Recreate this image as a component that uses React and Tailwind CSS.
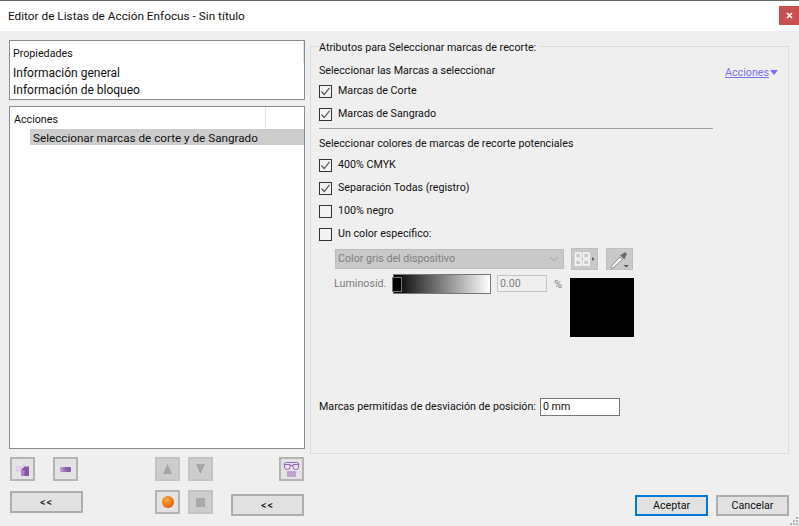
const font = { fontFamily: 'Roboto, "Noto Sans", sans-serif' };

function Check({ checked, label, mt }) {
  return (
    <div className={`flex items-center gap-[6px] h-[14px] ${mt}`}>
      <span className="w-[13px] h-[13px] border border-[#333] bg-[#f3f3f3] flex items-center justify-center shrink-0">
        {checked && (
          <svg width="11" height="11" viewBox="0 0 11 11" fill="none">
            <path d="M1.5 5.5L4.2 8.5L9.5 1.8" stroke="#555" strokeWidth="1.2" />
          </svg>
        )}
      </span>
      <span className="text-[10.7px] text-[#111] leading-none whitespace-nowrap">{label}</span>
    </div>
  );
}

function ToolBtn({ children, disabled, className = "" }) {
  return (
    <button className={`w-[25px] h-[24px] border-2 flex items-center justify-center shrink-0 ${disabled ? "border-[#c3c3c3] bg-[#cdcdcd]" : "border-[#b4b4b4] bg-[#e3e3e3]"} ${className}`}>
      {children}
    </button>
  );
}

function BackBtn({ className = "" }) {
  return (
    <button className={`w-[73px] h-[22px] border-2 border-[#adadad] bg-[#e1e1e1] text-[11px] text-[#111] flex items-center justify-center leading-none tracking-[1px] ${className}`}>
      {"<<"}
    </button>
  );
}

export default function App() {
  return (
    <div style={font} className="w-[799px] h-[526px] bg-[#efefef] flex flex-col overflow-hidden relative">
      <header className="h-[31px] bg-white border-t border-[#666] flex items-center justify-between shrink-0">
        <span className="ml-[8px] mt-[2px] text-[11.8px] text-[#111] leading-none">Editor de Listas de Acción Enfocus - Sin título</span>
        <span className="mt-[-1px] w-[20px] h-[19px] bg-[#c75050] text-white flex items-center justify-center">
          <svg width="7" height="7" viewBox="0 0 7 7"><path d="M1 1L6 6M6 1L1 6" stroke="#fff" strokeWidth="1.7" /></svg>
        </span>
      </header>

      <div className="flex-1 flex pl-[9px] pr-[10px] min-h-0">
        <div className="w-[296px] shrink-0 flex flex-col pt-[9px]">
          <section className="h-[60px] bg-white border border-[#868c96] pl-[3px] relative shrink-0">
            <div className="text-[10.7px] leading-none text-[#111] mt-[8px]">Propiedades</div>
            <div className="text-[12px] leading-none text-[#111] mt-[7px]">Información general</div>
            <div className="text-[12px] leading-none text-[#111] mt-[5px]">Información de bloqueo</div>
            <div className="absolute right-0 top-0 w-px h-[22px] bg-[#e3e3e3]" />
          </section>

          <section className="h-[343px] mt-[6px] bg-white border border-[#868c96] shrink-0">
            <div className="h-[22px] flex items-center pl-[4px]">
              <span className="flex-1 mt-[5px] text-[10.7px] text-[#111] leading-none">Acciones</span>
              <span className="w-[39px] h-full border-l border-[#e3e3e3]" />
            </div>
            <div className="ml-[20px] h-[16px] bg-[#cdcdcd] pl-[3px] pt-[3px] flex items-center text-[11.7px] text-[#111] leading-none whitespace-nowrap">
              Seleccionar marcas de corte y de Sangrado
            </div>
          </section>

          <div className="flex items-center mt-[8px] pl-[1px]">
            <ToolBtn>
              <svg width="15" height="16" viewBox="0 0 15 16">
                <path d="M1 6L5 1.5H9.5V5L6 8V11H1Z" fill="#dccfe5" />
                <path d="M5 1.5H9.5L6.5 5H2Z" fill="#eee6f2" />
                <path d="M6 9L9.5 5.5H14V15H6Z" fill="#8a55a6" />
                <path d="M6 9H9.5V15H6Z" fill="#ab84c1" />
              </svg>
            </ToolBtn>
            <ToolBtn className="ml-[18px]">
              <svg width="13" height="7" viewBox="0 0 13 7">
                <defs><linearGradient id="m" x1="0" x2="1" y1="0" y2="0"><stop offset="0" stopColor="#c2a6d2" /><stop offset="0.6" stopColor="#8c5ba6" /></linearGradient></defs>
                <rect x="1" y="1" width="11" height="5" rx="1" fill="url(#m)" />
              </svg>
            </ToolBtn>
            <ToolBtn disabled className="ml-[77px]">
              <svg width="11" height="10" viewBox="0 0 11 10"><path d="M5.5 0L10 10H1Z" fill="#a5a5a5" /></svg>
            </ToolBtn>
            <ToolBtn disabled className="ml-[8px]">
              <svg width="11" height="10" viewBox="0 0 11 10"><path d="M1 0H10L5.5 10Z" fill="#a5a5a5" /></svg>
            </ToolBtn>
            <ToolBtn className="ml-[66px]">
              <svg width="17" height="17" viewBox="0 0 17 17" fill="none" stroke="#9c64b8">
                <path d="M1 4Q1 1.5 3.5 1.5H13.5Q16 1.5 16 4" />
                <path d="M1.5 3.5H7V6Q7 8.5 4.5 8.5H4Q1.5 8.5 1.5 6ZM10 3.5H15.5V6Q15.5 8.5 13 8.5H12.5Q10 8.5 10 6ZM7 4.5H10" />
                <path d="M4 11H13M4 13H13M4 15H13" />
              </svg>
            </ToolBtn>
          </div>

          <div className="flex items-start mt-[9px] pl-[1px]">
            <BackBtn className="mt-px" />
            <ToolBtn className="ml-[72px]">
              <span className="w-[12px] h-[12px] rounded-full bg-[radial-gradient(circle_at_40%_35%,#fbb040,#e8670c_65%,#c84f08)]" />
            </ToolBtn>
            <ToolBtn disabled className="ml-[8px]">
              <span className="w-[9px] h-[9px] bg-[#a8a8a8] block" />
            </ToolBtn>
            <BackBtn className="ml-[18px] mt-[4px]" />
          </div>
        </div>

        <div className="flex-1 ml-[5px] flex flex-col min-w-0">
          <fieldset className="h-[414px] mt-[9px] border border-[#dcdcdc] px-[8px] min-w-0 block">
            <legend className="text-[10.7px] leading-none text-[#111] pt-[3px] pr-[3px] whitespace-nowrap">Atributos para Seleccionar marcas de recorte:</legend>
            <div className="flex justify-between mt-[12px]">
              <span className="text-[10.7px] leading-none text-[#111]">Seleccionar las Marcas a seleccionar</span>
              <span className="flex items-center mt-[2px] mr-[2px] text-[10.7px] leading-none text-[#7a6fe8] underline">
                Acciones
                <svg width="8" height="5" viewBox="0 0 8 5" className="ml-px mb-[2px]"><path d="M0 0H8L4 5Z" fill="#7a6fe8" /></svg>
              </span>
            </div>
            <Check checked label="Marcas de Corte" mt="mt-[6px]" />
            <Check checked label="Marcas de Sangrado" mt="mt-[9px]" />
            <div className="w-[394px] h-px bg-[#a0a0a0] mt-[7px]" />
            <div className="text-[10.7px] leading-none text-[#111] mt-[10px]">Seleccionar colores de marcas de recorte potenciales</div>
            <Check checked label="400% CMYK" mt="mt-[8px]" />
            <Check checked label="Separación Todas (registro)" mt="mt-[9px]" />
            <Check label="100% negro" mt="mt-[9px]" />
            <Check label="Un color específico:" mt="mt-[9px]" />

            <div className="flex items-center mt-[7px] ml-[16px]">
              <div className="w-[229px] h-[20px] bg-[#c9c9c9] border border-[#bdbdbd] flex items-center justify-between pl-[2px] pr-[4px]">
                <span className="text-[10.7px] text-[#808080] leading-none">Color gris del dispositivo</span>
                <svg width="10" height="6" viewBox="0 0 10 6" fill="none"><path d="M1 1L5 5L9 1" stroke="#a8a8a8" /></svg>
              </div>
              <div className="ml-[7px] w-[27px] h-[22px] bg-[#c9c9c9] border border-[#bfbfbf] flex items-center justify-center">
                <svg width="21" height="14" viewBox="0 0 21 14" fill="none">
                  <path d="M1.5 1H7V6H1.5ZM9.5 1H15V6H9.5ZM1.5 8H7V13H1.5ZM9.5 8H15V13H9.5Z" stroke="#f8f8f8" strokeWidth="1.5" />
                  <path d="M18 5L20.5 7L18 9Z" fill="#606060" />
                </svg>
              </div>
              <div className="ml-[8px] w-[27px] h-[22px] bg-[#c9c9c9] border border-[#bfbfbf] flex items-center justify-center">
                <svg width="21" height="19" viewBox="0 0 21 19" fill="none">
                  <path d="M2 16.5L11 7L13.5 9.5L4 18L2 18Z" fill="#f8f8f8" stroke="#8a8a8a" />
                  <path d="M11 5L15.5 9.5L16.5 6.5L18 4.5L16 2L13.5 4Z" fill="#6a6a6a" />
                  <path d="M14.5 15H20L17.2 17.5Z" fill="#555" />
                </svg>
              </div>
            </div>

            <div className="flex items-start ml-[15px] mt-[4px]">
              <span className="text-[10.7px] text-[#7d7d7d] leading-none mt-[5px] w-[58px] shrink-0">Luminosid.</span>
              <div className="w-[98px] h-[20px] ml-[1px] border border-[#777] bg-[linear-gradient(to_right,#000,#fff)] relative shrink-0">
                <span className="absolute left-[-2px] top-[2px] w-[10px] h-[15px] bg-black border border-[#777]" />
              </div>
              <div className="ml-[6px] w-[50px] h-[17px] mt-px border border-[#c4c4c4] pl-[2px] pt-[2px] flex items-center text-[10.7px] text-[#808080] leading-none shrink-0">0.00</div>
              <span className="ml-[7px] text-[11px] text-[#808080] leading-none mt-[5px] w-[16px] shrink-0">%</span>
              <div className="w-[64px] h-[59px] mt-[4px] bg-black shrink-0" />
            </div>

            <div className="flex items-center mt-[61px]">
              <span className="text-[10.7px] text-[#111] leading-none whitespace-nowrap">Marcas permitidas de desviación de posición:</span>
              <div className="ml-[4px] w-[80px] h-[18px] bg-white border border-[#777] pl-[2px] flex items-center text-[10.7px] text-[#111] leading-none">0 mm</div>
            </div>
          </fieldset>

          <div className="flex justify-end gap-[8px] mt-[41px]">
            <button className="w-[73px] h-[21px] border-2 border-[#0078d7] bg-[#e1e1e1] pt-[2px] text-[10.7px] text-[#111] leading-none">Aceptar</button>
            <button className="w-[73px] h-[21px] border-2 border-[#adadad] bg-[#e1e1e1] pt-[2px] text-[10.7px] text-[#111] leading-none">Cancelar</button>
          </div>
        </div>
      </div>

      <svg width="8" height="8" viewBox="0 0 8 8" className="absolute right-[1px] bottom-[1px]" fill="#b5b5b5">
        <rect x="6" y="0" width="2" height="2" /><rect x="3" y="3" width="2" height="2" /><rect x="6" y="3" width="2" height="2" />
        <rect x="0" y="6" width="2" height="2" /><rect x="3" y="6" width="2" height="2" /><rect x="6" y="6" width="2" height="2" />
      </svg>
    </div>
  );
}
